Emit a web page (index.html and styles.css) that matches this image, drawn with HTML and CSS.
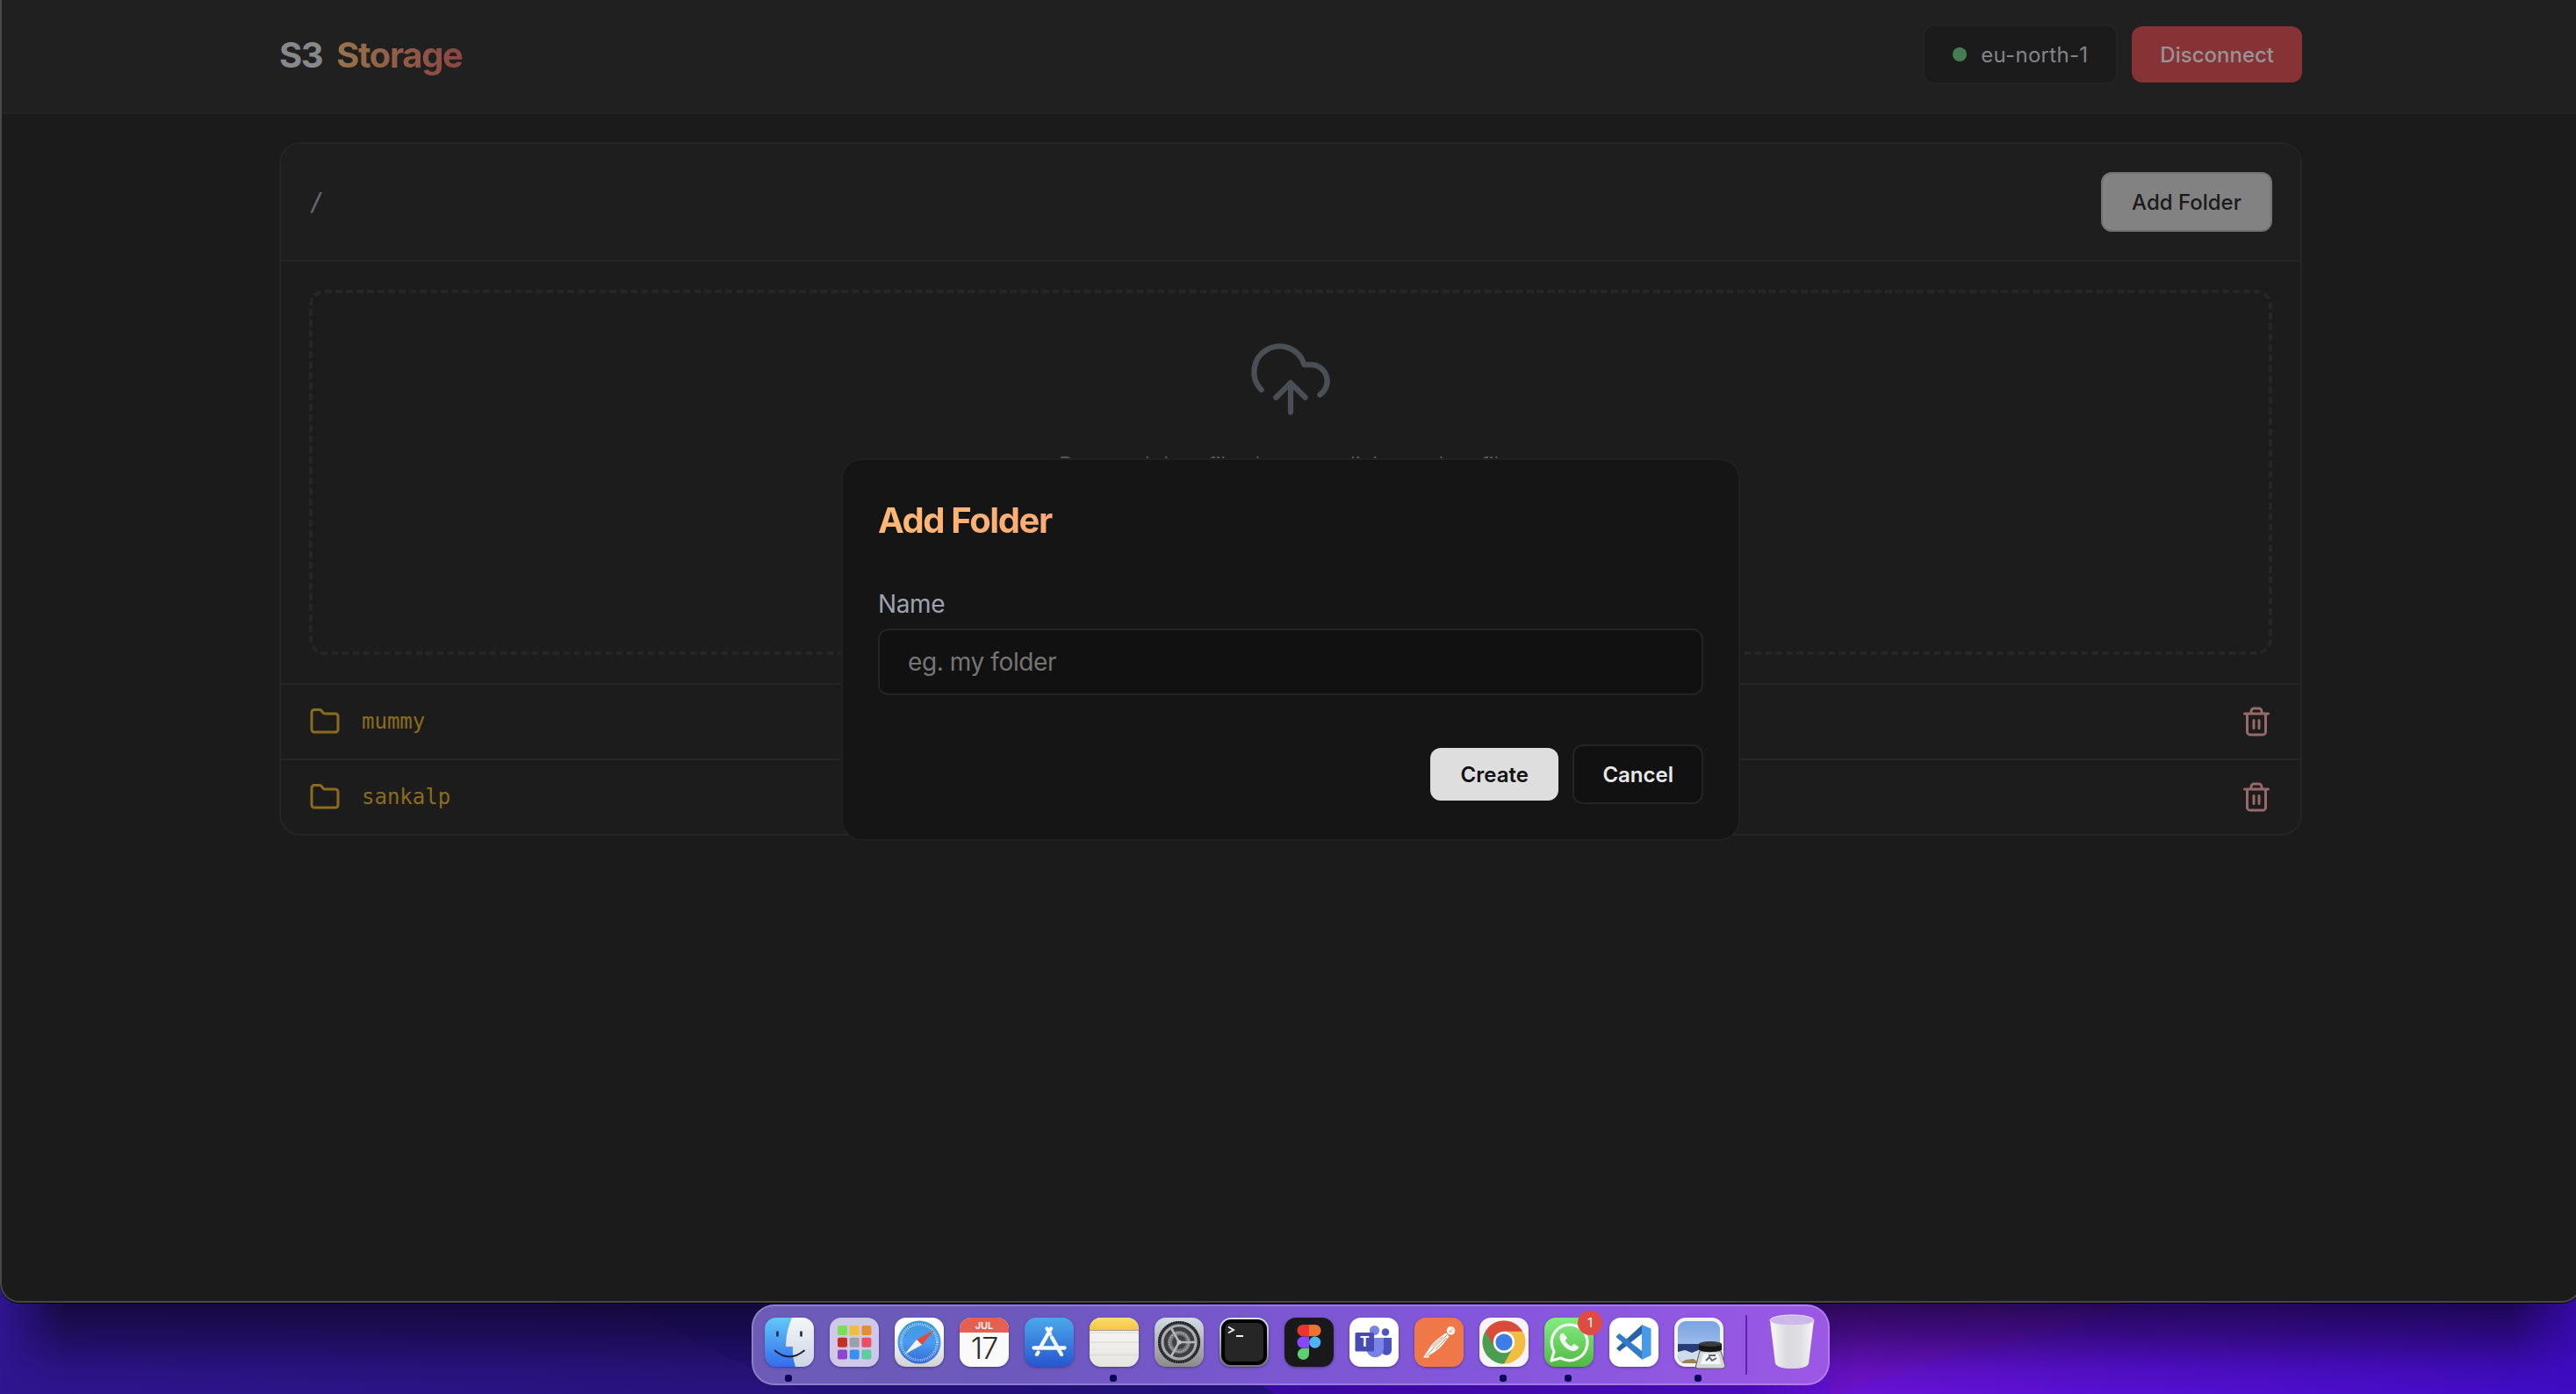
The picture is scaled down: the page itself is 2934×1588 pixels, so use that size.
FILE: index.html
```html
<!DOCTYPE html>
<html lang="en">
<head>
<meta charset="utf-8">
<title>S3 Storage</title>
<link rel="stylesheet" href="styles.css">
</head>
<body>
<svg class="defs" width="0" height="0" aria-hidden="true">
  <symbol id="folder" viewBox="0 0 24 24"><path d="M20 20a2 2 0 0 0 2-2V8a2 2 0 0 0-2-2h-7.9a2 2 0 0 1-1.69-.9L9.6 3.9A2 2 0 0 0 7.93 3H4a2 2 0 0 0-2 2v13a2 2 0 0 0 2 2Z"/></symbol>
  <symbol id="trash" viewBox="0 0 24 24"><path d="M3 6h18M19 6v14c0 1-1 2-2 2H7c-1 0-2-1-2-2V6M8 6V4c0-1 1-2 2-2h4c1 0 2 1 2 2v2M10 11v6M14 11v6"/></symbol>
</svg>
<div class="desktop">
  <svg class="wallpaper" viewBox="0 0 2934 188" preserveAspectRatio="none">
    <defs>
      <linearGradient id="wl" x1="0" x2="1"><stop offset="0" stop-color="#2f1590"/><stop offset=".55" stop-color="#23126f"/><stop offset="1" stop-color="#1d105c"/></linearGradient>
      <linearGradient id="wr" x1="0" x2="1"><stop offset="0" stop-color="#36099e"/><stop offset=".42" stop-color="#4a0cb8"/><stop offset=".5" stop-color="#6913d6"/><stop offset=".68" stop-color="#5710d3"/><stop offset="1" stop-color="#3f0cc4"/></linearGradient>
      <linearGradient id="ws" x2="0" y2="1"><stop offset=".4" stop-color="#0a0418" stop-opacity=".72"/><stop offset=".65" stop-color="#0a0418" stop-opacity=".4"/><stop offset=".85" stop-color="#0a0418" stop-opacity=".1"/><stop offset="1" stop-color="#0a0418" stop-opacity="0"/></linearGradient>
      <linearGradient id="we" x2="1"><stop offset="0" stop-color="#fff" stop-opacity="0"/><stop offset=".025" stop-color="#fff"/><stop offset=".975" stop-color="#fff"/><stop offset="1" stop-color="#fff" stop-opacity=".3"/></linearGradient>
      <mask id="wm"><rect width="2934" height="188" fill="url(#we)"/></mask>
    </defs>
    <rect width="2934" height="188" fill="url(#wl)"/>
    <path d="M700 72L714 85Q790 130 860 160L920 188H1500V0H700Z" fill="#24117c"/>
    <path d="M1300 0L1436 177L1452 188H2934V0Z" fill="url(#wr)"/>
    <path d="M2084 190V85H2420Q2330 125 2240 140Z" fill="#7a12a8" opacity=".22"/>
    <rect width="2934" height="188" fill="url(#ws)" mask="url(#wm)"/>
  </svg>
  <div class="window">
    <header class="topbar">
      <div class="container topbar-row">
        <h1 class="brand"><span>S3</span><span class="brand-accent">Storage</span></h1>
        <div class="actions">
          <div class="region"><i class="status"></i><span>eu-north-1</span></div>
          <button class="btn-danger">Disconnect</button>
        </div>
      </div>
    </header>
    <main class="container">
      <section class="card">
        <div class="card-head"><span class="path">/</span><button class="btn-light">Add Folder</button></div>
        <div class="drop-wrap">
          <div class="dropzone">
            <svg class="cloud" viewBox="0 0 24 24"><path d="M12 13v8M4 14.899A7 7 0 1 1 15.71 8h1.79a4.5 4.5 0 0 1 2.5 8.242M8 17l4-4 4 4"/></svg>
            <p>Drag and drop files here, or click to select files</p>
          </div>
        </div>
        <div class="row"><svg class="folder"><use href="#folder"/></svg><span class="name">mummy</span><svg class="trash"><use href="#trash"/></svg></div>
        <div class="row"><svg class="folder"><use href="#folder"/></svg><span class="name">sankalp</span><svg class="trash"><use href="#trash"/></svg></div>
      </section>
    </main>
    <div class="overlay">
      <form class="modal">
        <h2>Add Folder</h2>
        <label for="folder-name">Name</label>
        <input id="folder-name" type="text" placeholder="eg. my folder">
        <div class="modal-actions"><button class="create" type="button">Create</button><button class="cancel" type="button">Cancel</button></div>
      </form>
    </div>
  </div>
  <nav class="dock">
    <div class="app running">
      <svg viewBox="0 0 56 56"><defs><linearGradient id="f1" x2="0" y2="1"><stop stop-color="#62c8f6"/><stop offset="1" stop-color="#336cee"/></linearGradient><linearGradient id="f2" x2="0" y2="1"><stop stop-color="#f6f6f8"/><stop offset="1" stop-color="#ccd5e4"/></linearGradient><clipPath id="r"><rect width="56" height="56" rx="13"/></clipPath></defs><g clip-path="url(#r)"><rect width="56" height="56" fill="url(#f1)"/><path d="M31 0Q24 16 24 33h8Q31 45 35 56h21V0Z" fill="url(#f2)"/></g><path d="M14.500 16.500v4M41.500 16.500v4" stroke="#1d2a3f" stroke-width="2.600" stroke-linecap="round"/><path d="M11.500 37.500Q28 51.500 45 37.500" fill="none" stroke="#151c2b" stroke-width="1.700" stroke-linecap="round"/></svg>
    </div>
    <div class="app">
      <svg viewBox="0 0 56 56"><rect width="56" height="56" rx="13" fill="#cfc8e8"/><g><rect x="9" y="9" width="11" height="11" rx="2" fill="#79df55"/><rect x="22.700" y="9" width="11" height="11" rx="2" fill="#f2bd3c"/><rect x="36.400" y="9" width="11" height="11" rx="2" fill="#e38d37"/><rect x="9" y="22.800" width="11" height="11" rx="2" fill="#c62f27"/><rect x="22.700" y="22.800" width="11" height="11" rx="2" fill="#99a0a6"/><rect x="36.400" y="22.800" width="11" height="11" rx="2" fill="#e94e66"/><rect x="9" y="36.600" width="11" height="11" rx="2" fill="#9046cc"/><rect x="22.700" y="36.600" width="11" height="11" rx="2" fill="#3a90f2"/><rect x="36.400" y="36.600" width="11" height="11" rx="2" fill="#60cba0"/></g></svg>
    </div>
    <div class="app">
      <svg viewBox="0 0 56 56"><defs><linearGradient id="s1" x2="0" y2="1"><stop offset=".3" stop-color="#fff"/><stop offset="1" stop-color="#d2d2d4"/></linearGradient><linearGradient id="s2" x2="0" y2="1"><stop stop-color="#3f97dc"/><stop offset=".5" stop-color="#4a9cf0"/><stop offset="1" stop-color="#3269d6"/></linearGradient></defs><rect width="56" height="56" rx="13" fill="url(#s1)"/><circle cx="28" cy="28" r="24.500" fill="url(#s2)"/><circle cx="28" cy="28" r="20.500" fill="none" stroke="#e3f0ff" stroke-opacity=".8" stroke-width="3" stroke-dasharray=".8 1.350"/><path d="M45 14L31 31L25 25Z" fill="#e4493b"/><path d="M11 42L31 31L25 25Z" fill="#f3f3f5"/></svg>
    </div>
    <div class="app">
      <div class="calendar"><b>JUL</b><span>17</span></div>
    </div>
    <div class="app">
      <svg viewBox="0 0 56 56"><defs><linearGradient id="a1" x2="0" y2="1"><stop stop-color="#4ba9ea"/><stop offset="1" stop-color="#2656d0"/></linearGradient></defs><rect width="56" height="56" rx="13" fill="url(#a1)"/><g stroke="#f4f8ff" stroke-width="4.300" stroke-linecap="round"><path d="M30 12.500L18.500 33M15.500 39.500L14 42M25.500 12.500L29 18.500M31 22.500L42 42"/><path d="M10.500 34.500H45.500"/></g></svg>
    </div>
    <div class="app running">
      <svg viewBox="0 0 56 56"><defs><linearGradient id="n1" x2="0" y2="1"><stop stop-color="#fbdc6e"/><stop offset="1" stop-color="#f6c740"/></linearGradient><linearGradient id="n2" x2="0" y2="1"><stop stop-color="#f9f9f7"/><stop offset="1" stop-color="#e5e4df"/></linearGradient></defs><g clip-path="url(#r)"><rect width="56" height="56" fill="url(#n2)"/><rect width="56" height="14" fill="url(#n1)"/><path d="M0 14.500H56" stroke="#a99f83"/><path d="M1 17H56" stroke="#c9c9c5" stroke-width="1.600" stroke-dasharray="1 1.400"/><path d="M0 28H56M0 42.500H56" stroke="#d5d4d0"/></g></svg>
    </div>
    <div class="app">
      <svg viewBox="0 0 56 56"><defs><linearGradient id="g1" x2="0" y2="1"><stop stop-color="#d2dde6"/><stop offset="1" stop-color="#8c8a8a"/></linearGradient></defs><rect width="56" height="56" rx="13" fill="url(#g1)"/><circle cx="28" cy="28" r="24" fill="#3d3f42"/><circle cx="28" cy="28" r="22.800" fill="none" stroke="#1e1f21" stroke-width="2.600" stroke-dasharray="1.500 1.200"/><circle cx="28" cy="28" r="19" fill="none" stroke="#a9acb0" stroke-width="3"/><circle cx="28" cy="28" r="13" fill="#747679"/><circle cx="28" cy="28" r="11" fill="none" stroke="#b0b3b6" stroke-width="1.500" stroke-dasharray="1.600 1.200"/><circle cx="28" cy="28" r="8" fill="#3f4144"/><path d="M28 28H47M28 28L19 12M28 28L19 44" stroke="#b5b8bb" stroke-width="2.600"/><circle cx="28" cy="28" r="2.600" fill="#c0c3c6"/></svg>
    </div>
    <div class="app">
      <svg viewBox="0 0 56 56"><defs><linearGradient id="t1" x2="0" y2="1"><stop stop-color="#d5e4ee"/><stop offset="1" stop-color="#747474"/></linearGradient></defs><rect width="56" height="56" rx="13" fill="url(#t1)"/><rect x="2" y="2" width="52" height="52" rx="11" fill="#000"/><rect x="6" y="6" width="44" height="44" rx="7" fill="#262626"/><path d="M10 10.500L16 14L10 17.500M19 21H27" fill="none" stroke="#f2f2f2" stroke-width="1.900"/></svg>
    </div>
    <div class="app">
      <svg viewBox="0 0 56 56"><rect width="56" height="56" rx="13" fill="#191919"/><path d="M28 8H21a6.500 6.500 0 0 0 0 13.200H28Z" fill="#ee3431"/><path d="M28 8H35a6.500 6.500 0 0 1 0 13.200H28Z" fill="#f07134"/><path d="M28 21.500H21a6.600 6.600 0 0 0 0 13.200H28Z" fill="#8747fb"/><circle cx="34.700" cy="28.100" r="6.600" fill="#4fb3fa"/><path d="M28 34.900H21A6.600 6.600 0 1 0 28 41.500Z" fill="#5ece75"/></svg>
    </div>
    <div class="app">
      <svg viewBox="0 0 56 56"><rect width="56" height="56" rx="13" fill="#fff"/><circle cx="41" cy="16.500" r="4.300" fill="#4f54be"/><path d="M37 23H48V36a6 6 0 0 1-11 4Z" fill="#4d53be"/><circle cx="28.500" cy="14.500" r="5.600" fill="#7b83e6"/><path d="M20 23H39V36.500a9.800 9.800 0 0 1-19.500 0Z" fill="#7b83e6"/><rect x="6.500" y="17" width="21.500" height="21.500" rx="1.500" fill="#464cb4"/><text class="teams-letter" x="17.300" y="33.300" text-anchor="middle">T</text></svg>
    </div>
    <div class="app">
      <svg viewBox="0 0 56 56"><rect width="56" height="56" rx="13" fill="#ef7748"/><circle cx="41.500" cy="14.800" r="4.800" fill="#fff"/><path d="M40 14.500L43 17M39 17.500L44.500 12.500" stroke="#ef7748" stroke-width=".8"/><path d="M36 17.500L39.500 21.500L30 33.500Q20 42 16 43L17 45.500H10L19.500 31Q27 23 36 17.500Z" fill="#fff"/><path d="M37 20L21 35M32 22L20 33M37 23L24 36M13 44L22 35" stroke="#ef7748" stroke-width=".9"/></svg>
    </div>
    <div class="app running">
      <svg viewBox="0 0 56 56"><rect width="56" height="56" rx="13" fill="#f6f4fb"/><circle cx="28" cy="28" r="24.500" fill="#f3bd42"/><path d="M28 28L6.800 15.750A24.500 24.500 0 0 0 28 52.500L38.500 34Z" fill="#4a9d51"/><path d="M28 15.750H49.200A24.500 24.500 0 0 0 6.800 15.750L17.400 34Z" fill="#d94c3c"/><circle cx="28" cy="28" r="12.200" fill="#fff"/><circle cx="28" cy="28" r="9.600" fill="#3f7de6"/></svg>
    </div>
    <div class="app running">
      <svg viewBox="0 0 56 56"><defs><linearGradient id="w1" x2="0" y2="1"><stop stop-color="#83ee80"/><stop offset="1" stop-color="#52b843"/></linearGradient></defs><rect width="56" height="56" rx="13" fill="url(#w1)"/><path d="M8 49L11 38.500A20.300 20.300 0 1 1 18.500 46Z" fill="none" stroke="#f5f5f3" stroke-width="3.200" stroke-linejoin="round"/><path d="M21.500 17.500c-1.500-.5-4 1.500-4 5 0 6 8 15 15.500 15.500 3.500 0 6-2.500 6-5l-5.500-3.300-2.800 3c-3-1.200-6-4.200-7-7l2.400-2.500Z" fill="#f5f5f3"/></svg>
      <span class="badge">1</span>
    </div>
    <div class="app">
      <svg viewBox="0 0 56 56"><rect width="56" height="56" rx="13" fill="#fff"/><path d="M8 35L11.500 38.500L37.500 18V8L8 35Z" fill="#2763a8"/><path d="M8 21L11.500 18L37.500 38.500V48L8 22.500Z" fill="#347cc9"/><path d="M37 8L47.500 12.500V43L37 48Z" fill="#489ae9"/></svg>
    </div>
    <div class="app running">
      <svg viewBox="0 0 56 56"><defs><linearGradient id="p1" x2="0" y2="1"><stop stop-color="#79a3e2"/><stop offset="1" stop-color="#b5cdf0"/></linearGradient></defs><rect width="56" height="56" rx="13" fill="#f3f3f4"/><rect x="4" y="4" width="48" height="48" rx="9" fill="url(#p1)"/><path d="M4 30H52V43a9 9 0 0 1-9 9H13a9 9 0 0 1-9-9Z" fill="#263c74"/><path d="M4 39L12 37L20 40L30 36V52H13a9 9 0 0 1-9-9Z" fill="#cfdceb"/><path d="M8 51L13 48L22 47L28 52H11Z" fill="#9a8058"/><path d="M29 38H53L58 55Q58 58 54 58H28Q24 58 24.500 55Z" fill="#d4d6d9" stroke="#54565a"/><path d="M33 41H50L53 53H30Z" fill="#f5f6f8"/><path d="M36 49l4-4 3 4 5-3M39 43h8" stroke="#5b6573" stroke-width="2" fill="none"/><path d="M28 30V37Q40 41.500 54 37V30Z" fill="#151516"/><ellipse cx="41" cy="30" rx="13" ry="3" fill="#3b3b3d"/></svg>
    </div>
    <i class="divider"></i>
    <svg class="bin" viewBox="0 0 52 64"><defs><linearGradient id="b1" x2="1"><stop stop-color="#fafafa"/><stop offset=".4" stop-color="#d9d9de"/><stop offset=".7" stop-color="#dfdfe3"/><stop offset="1" stop-color="#f7f7f9"/></linearGradient></defs><path d="M1 7L7 56Q9 62 26 62T45 56L51 7Z" fill="url(#b1)"/><ellipse cx="26" cy="7" rx="25" ry="6" fill="#cdb9e8" stroke="#eae2f6"/></svg>
  </nav>
</div>
</body>
</html>
```
FILE: styles.css
```css
* { box-sizing: border-box; }
body { margin: 0; background: #1f1068; font-family: Inter, "Liberation Sans", sans-serif; }
button, input { font-family: inherit; margin: 0; }
.defs { position: absolute; }

.desktop { position: relative; width: 2934px; height: 1588px; overflow: hidden; display: flex; flex-direction: column; align-items: center; }
.wallpaper { position: absolute; left: 0; bottom: 0; width: 2934px; height: 188px; }

.window {
  position: relative; flex: none; align-self: flex-start; width: 2940px; height: 1484px;
  background: #1b1b1b; border: 2px solid #484848; border-top: 0; border-radius: 0 0 22px 22px;
  box-shadow: 0 1px 0 #050309; overflow: hidden;
}
.container { width: 2304px; margin: 0 auto; }

.topbar { background: #202020; border-bottom: 2px solid #232323; height: 130px; padding-top: 28px; }
.topbar-row { display: flex; justify-content: space-between; align-items: center; height: 68px; }
.brand { margin: 0; display: flex; gap: 16px; padding-top: 2px; font-size: 40px; line-height: 56px; font-weight: 700; letter-spacing: -1.4px; color: #87888a; }
.brand-accent { padding-right: 2px; background: linear-gradient(90deg, #96744a, #8d4444); -webkit-background-clip: text; background-clip: text; color: transparent; }
.actions { display: flex; align-items: center; gap: 16px; }
.region { display: flex; align-items: center; gap: 16px; height: 68px; padding: 0 32px; border: 2px solid #232323; border-radius: 12px; background: #1b1b1b; color: #838488; font-size: 24px; letter-spacing: .3px; }
.status { width: 16px; height: 16px; border-radius: 50%; background: #467d52; }
.btn-danger { height: 64px; padding: 0 32px; border: 0; border-radius: 12px; background: #873335; color: #969494; font-size: 24px; font-weight: 500; }

.card { margin-top: 32px; border: 2px solid #252525; border-radius: 24px; background: #1c1c1c; }
.card-head { display: flex; justify-content: space-between; align-items: center; padding: 32px; height: 132px; background: #1e1e1e; border-radius: 22px 22px 0 0; }
.path { color: #65686e; font: 28px "DejaVu Sans Mono", monospace; }
.btn-light { height: 68px; padding: 0 33px; border: 2px solid #727272; border-radius: 12px; background: #828282; color: #1b1b1b; font-size: 24px; font-weight: 500; }
.drop-wrap { padding: 32px; border-top: 2px solid #252525; }
.dropzone { height: 416px; padding-top: 48px; border: 4px dashed #262626; border-radius: 18px; text-align: center; }
.cloud { display: block; width: 100px; height: 100px; margin: 0 auto 32px; fill: none; stroke: #4a4e55; stroke-width: 1.5; stroke-linecap: round; stroke-linejoin: round; }
.dropzone p { margin: 0; font-size: 24px; line-height: 32px; color: #55575c; }
.row { display: flex; align-items: center; height: 86px; padding: 0 32px; border-top: 2px solid #262626; }
.row svg { width: 36px; height: 36px; fill: none; stroke-width: 2; stroke-linecap: round; stroke-linejoin: round; }
.folder { stroke: #8c6c1c; }
.trash { stroke: #956a68; }
.name { flex: 1; padding-left: 24px; font: 24px "DejaVu Sans Mono", monospace; color: #8c6c1c; }

.overlay { position: absolute; inset: -2px 0 0 0; display: flex; align-items: center; justify-content: center; }
.modal { width: 1024px; height: 436px; padding: 40px; border: 2px solid #202020; border-radius: 24px; background: #151515; }
.modal h2 {
  margin: 0; padding-top: 1px; font-size: 40px; line-height: 56px; font-weight: 700; letter-spacing: -1.4px;
  background: linear-gradient(90deg, #fdba74, #f87171); -webkit-background-clip: text; background-clip: text; color: transparent;
}
.modal label { display: block; margin-top: 47px; font-size: 28px; line-height: 40px; letter-spacing: -.4px; color: #9ca3af; }
.modal input { display: block; width: 100%; height: 76px; margin-top: 8px; padding: 0 32px; border: 2px solid #242424; border-radius: 12px; background: #111; font-size: 28px; letter-spacing: -.4px; color: #fff; }
.modal input::placeholder { color: #757575; }
.modal-actions { display: flex; justify-content: flex-end; align-items: center; gap: 16px; margin-top: 56px; height: 68px; }
.modal-actions button { border-radius: 12px; font-size: 24px; font-weight: 600; }
.create { height: 60px; padding: 0 34.5px; border: 0; background: #dedede; color: #111; }
.cancel { height: 68px; padding: 0 32px; border: 2px solid #242424; background: #111; color: #e8e8e8; }

.dock {
  position: relative; flex: none; display: flex; align-items: flex-start; gap: 18px; width: 1228px; height: 92px; margin-top: 2px; margin-left: 6px;
  padding: 13px 13px 0; border: 2px solid rgba(255, 255, 255, .22); border-radius: 26px;
  background: linear-gradient(100deg, #6c5cb6 0, #6d59bd 26%, #7b57d2 50%, #8657dc 72%, #9c58e5 100%) border-box;
}
.app { position: relative; flex: none; width: 56px; height: 56px; border-radius: 13px; box-shadow: 0 1px 3px rgba(20, 0, 60, .4); }
.app svg { display: block; width: 56px; height: 56px; overflow: visible; }
.running::after { content: ""; position: absolute; left: 23px; top: 65px; width: 8px; height: 8px; border-radius: 3px; background: #0d0356; }
.calendar { height: 56px; border-radius: 13px; overflow: hidden; background: #fafafa; text-align: center; display: flex; flex-direction: column; color: #2d2d2d; }
.calendar b { height: 17px; background: #e5604f; color: #fff; font-size: 11px; line-height: 19px; font-weight: 600; }
.calendar span { font-size: 34px; line-height: 36px; font-weight: 300; letter-spacing: -1px; }
.teams-letter { font: 700 16px Inter, sans-serif; fill: #fff; }
.badge { position: absolute; left: 38px; top: -8px; width: 28px; height: 28px; border-radius: 50%; background: #df4b40; color: #fff; font-size: 15px; line-height: 28px; text-align: center; }
.divider { flex: none; width: 2px; height: 68px; margin: -3px 7px 0 7px; background: #6224ae; }
.bin { flex: none; width: 52px; height: 64px; margin-top: -4px; }
```
